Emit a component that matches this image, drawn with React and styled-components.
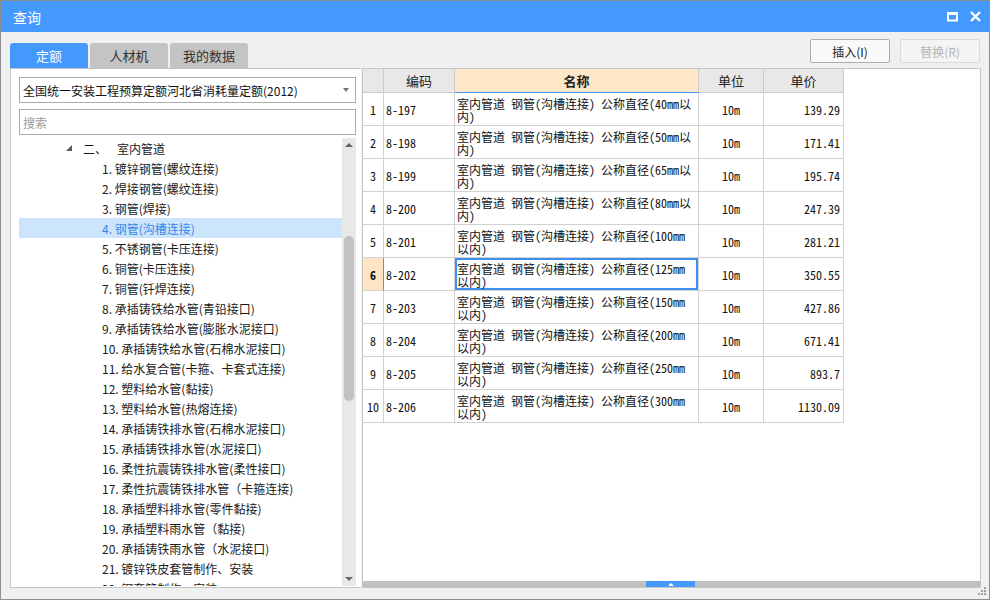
import React from 'react';
import styled, { createGlobalStyle } from 'styled-components';

const UI = '"Noto Sans CJK SC", "Microsoft YaHei", sans-serif';
const MONO = '"Noto Sans Mono CJK SC", "Liberation Mono", "Noto Sans CJK SC", monospace';

const GlobalStyle = createGlobalStyle`
  html, body { margin: 0; padding: 0; }
  body { font-family: ${UI}; font-size: 12px; color: #1a1a1a; background: #fff; }
  * { box-sizing: border-box; }
`;

const Window = styled.div`
  width: 990px;
  height: 600px;
  border: 1px solid #8f8f8f;
  background: #f0f0f0;
  display: flex;
  flex-direction: column;
  position: relative;
  overflow: hidden;
`;

const TitleBar = styled.div`
  height: 31px;
  flex: none;
  background: #4499ff;
  display: flex;
  align-items: center;
  justify-content: space-between;
  padding: 0 8px 0 12px;
  color: #fff;
`;

const Title = styled.span`
  font-size: 14px;
  line-height: 1;
`;

const WinControls = styled.div`
  display: flex;
  align-items: center;
  gap: 12px;
`;

const Body = styled.div`
  flex: 1;
  min-height: 0;
  display: grid;
  grid-template-columns: 351px 619px;
  grid-template-rows: 36px 1fr;
  column-gap: 1px;
  padding: 0 8px 11px 9px;
`;

const Tabs = styled.div`
  align-self: end;
  display: flex;
  gap: 2px;
`;

const Tab = styled.div`
  width: ${p => p.$w}px;
  height: 25px;
  border-radius: 3px 3px 0 0;
  background: ${p => (p.$active ? '#4499ff' : '#c4c4c4')};
  color: ${p => (p.$active ? '#fff' : '#333')};
  font-size: 13px;
  display: flex;
  align-items: center;
  justify-content: center;
`;

const Toolbar = styled.div`
  display: flex;
  justify-content: flex-end;
  align-items: flex-start;
  gap: 10px;
  padding: 7px 1px 0 0;
`;

const Button = styled.button`
  width: 80px;
  height: 24px;
  border: 1px solid ${p => (p.disabled ? '#d9d9d9' : '#adadad')};
  border-radius: 2px;
  background: ${p => (p.disabled ? '#f4f4f4' : '#f9f9f9')};
  color: ${p => (p.disabled ? '#b4b4b4' : '#222')};
  font-family: ${UI};
  font-size: 12px;
  padding: 0;
  cursor: default;
`;

const LeftPanel = styled.div`
  background: #fff;
  border: 1px solid #c6c6c6;
  border-right: none;
  padding: 8px 5px 0 8px;
  display: flex;
  flex-direction: column;
  min-height: 0;
`;

const Combo = styled.div`
  height: 26px;
  flex: none;
  border: 1px solid #ababab;
  background: #fff;
  display: flex;
  align-items: center;
  justify-content: space-between;
  padding: 0 6px 0 3px;
  font-size: 12px;
  color: #111;
`;

const ComboArrow = styled.span`
  width: 0;
  height: 0;
  border-left: 3.5px solid transparent;
  border-right: 3.5px solid transparent;
  border-top: 4px solid #777;
`;

const Search = styled.input`
  height: 26px;
  flex: none;
  margin-top: 6px;
  border: 1px solid #ababab;
  padding: 0 3px;
  font-family: ${UI};
  font-size: 12px;
  outline: none;
  &::placeholder { color: #9a9a9a; }
`;

const Tree = styled.div`
  flex: 1;
  min-height: 0;
  margin-top: 3px;
  margin-bottom: 1px;
  display: flex;
`;

const TreeList = styled.div`
  flex: 1;
  overflow: hidden;
`;

const TreeRow = styled.div`
  height: 20px;
  display: flex;
  align-items: center;
  white-space: nowrap;
  padding-left: ${p => p.$indent}px;
  background: ${p => (p.$selected ? '#cce5fc' : 'transparent')};
  color: ${p => (p.$selected ? '#3b86e6' : '#1a1a1a')};
  font-size: 12px;
`;

const Expander = styled.span`
  width: 0;
  height: 0;
  border-left: 6px solid transparent;
  border-bottom: 6px solid #595959;
  margin-right: 11px;
`;

const GroupNo = styled.span`
  margin-right: 10px;
`;

const VScroll = styled.div`
  width: 14px;
  flex: none;
  background: #e8e8e8;
  display: flex;
  flex-direction: column;
`;

const ScrollArrow = styled.div`
  height: 14px;
  flex: none;
  display: flex;
  align-items: center;
  justify-content: center;
  &::after {
    content: '';
    width: 0;
    height: 0;
    border-left: 4px solid transparent;
    border-right: 4px solid transparent;
    ${p => (p.$down ? 'border-top: 4px solid #666;' : 'border-bottom: 4px solid #666;')}
  }
`;

const VTrack = styled.div`
  flex: 1;
  padding: 84px 2px 0 2px;
`;

const VThumb = styled.div`
  height: 165px;
  border-radius: 5px;
  background: #c2c2c2;
`;

const RightPanel = styled.div`
  background: #fff;
  border: 1px solid #c6c6c6;
  display: flex;
  flex-direction: column;
  min-height: 0;
`;

const TableWrap = styled.div`
  flex: 1;
  min-height: 0;
  overflow: hidden;
`;

const COLS = '21px 71px 244px 65px 80px';

const HeadRow = styled.div`
  display: grid;
  grid-template-columns: ${COLS};
  height: 24px;
`;

const HeadCell = styled.div`
  border-right: 1px solid #cbcbcb;
  border-bottom: 1px solid ${p => (p.$hl ? '#4499ff' : '#cbcbcb')};
  background: ${p => (p.$hl ? '#fee6c9' : '#e8e8e8')};
  font-weight: ${p => (p.$hl ? 700 : 400)};
  font-size: 13px;
  color: #222;
  display: flex;
  align-items: center;
  justify-content: center;
`;

const DataRow = styled.div`
  display: grid;
  grid-template-columns: ${COLS};
  height: 33px;
  font-family: ${MONO};
  font-size: 12px;
  color: #111;
`;

const Cell = styled.div`
  border-right: 1px solid #d2d2d2;
  border-bottom: 1px solid #d2d2d2;
  display: flex;
  align-items: center;
  justify-content: ${p => p.$align || 'flex-start'};
  padding: 0 ${p => (p.$align === 'flex-end' ? '3px' : '2px')};
  white-space: nowrap;
`;

const NumCell = styled(Cell)`
  justify-content: center;
  padding: 0;
  background: ${p => (p.$sel ? '#fde4c3' : '#fff')};
  font-weight: ${p => (p.$sel ? 700 : 400)};
  border-right-color: ${p => (p.$sel ? '#4499ff' : '#d2d2d2')};
`;

const NameCell = styled.div`
  border-right: 1px solid #d2d2d2;
  border-bottom: 1px solid #d2d2d2;
  padding: 4px 2px 0 2px;
  line-height: 13px;
  white-space: pre;
  overflow: hidden;
  box-shadow: ${p => (p.$sel ? 'inset 0 0 0 2px #3f8ff0' : 'none')};
`;

const HScroll = styled.div`
  height: 6px;
  flex: none;
  background: #c0c0c0;
  padding-left: 283px;
  display: flex;
`;

const HThumb = styled.div`
  width: 49px;
  background: #4499ff;
  display: flex;
  align-items: center;
  justify-content: center;
  &::after {
    content: '';
    width: 0;
    height: 0;
    border-left: 3px solid transparent;
    border-right: 3px solid transparent;
    border-bottom: 3px solid #fff;
  }
`;

const Grip = styled.svg`
  position: absolute;
  right: 2px;
  bottom: 3px;
`;

const treeItems = [
  '1. 镀锌钢管(螺纹连接)',
  '2. 焊接钢管(螺纹连接)',
  '3. 钢管(焊接)',
  '4. 钢管(沟槽连接)',
  '5. 不锈钢管(卡压连接)',
  '6. 铜管(卡压连接)',
  '7. 铜管(钎焊连接)',
  '8. 承插铸铁给水管(青铅接口)',
  '9. 承插铸铁给水管(膨胀水泥接口)',
  '10. 承插铸铁给水管(石棉水泥接口)',
  '11. 给水复合管(卡箍、卡套式连接)',
  '12. 塑料给水管(黏接)',
  '13. 塑料给水管(热熔连接)',
  '14. 承插铸铁排水管(石棉水泥接口)',
  '15. 承插铸铁排水管(水泥接口)',
  '16. 柔性抗震铸铁排水管(柔性接口)',
  '17. 柔性抗震铸铁排水管（卡箍连接)',
  '18. 承插塑料排水管(零件黏接)',
  '19. 承插塑料雨水管（黏接)',
  '20. 承插铸铁雨水管（水泥接口)',
  '21. 镀锌铁皮套管制作、安装',
  '22. 钢套管制作、安装',
];

const rows = [
  ['8-197', '40mm', '139.29'],
  ['8-198', '50mm', '171.41'],
  ['8-199', '65mm', '195.74'],
  ['8-200', '80mm', '247.39'],
  ['8-201', '100mm', '281.21'],
  ['8-202', '125mm', '350.55'],
  ['8-203', '150mm', '427.86'],
  ['8-204', '200mm', '671.41'],
  ['8-205', '250mm', '893.7'],
  ['8-206', '300mm', '1130.09'],
];

function nameLines(size) {
  const base = '室内管道 钢管(沟槽连接) 公称直径(' + size;
  if (size.length <= 4) return base + '以\n内)';
  return base + '\n以内)';
}

export default function App() {
  return (
    <>
      <GlobalStyle />
      <Window>
        <TitleBar>
          <Title>查询</Title>
          <WinControls>
            <svg width="11" height="10" viewBox="0 0 11 10">
              <rect x="1" y="1.5" width="9" height="7" fill="none" stroke="#fff" strokeWidth="2" />
              <rect x="0" y="0" width="11" height="3" fill="#fff" />
            </svg>
            <svg width="11" height="11" viewBox="0 0 11 11">
              <path d="M1 1 L10 10 M10 1 L1 10" stroke="#fff" strokeWidth="2.4" />
            </svg>
          </WinControls>
        </TitleBar>
        <Body>
          <Tabs>
            <Tab $w={78} $active>定额</Tab>
            <Tab $w={78}>人材机</Tab>
            <Tab $w={78}>我的数据</Tab>
          </Tabs>
          <Toolbar>
            <Button>插入(I)</Button>
            <Button disabled>替换(R)</Button>
          </Toolbar>
          <LeftPanel>
            <Combo>
              <span>全国统一安装工程预算定额河北省消耗量定额(2012)</span>
              <ComboArrow />
            </Combo>
            <Search placeholder="搜索" />
            <Tree>
              <TreeList>
                <TreeRow $indent={47}>
                  <Expander />
                  <GroupNo>二、</GroupNo>
                  <span>室内管道</span>
                </TreeRow>
                {treeItems.map((t, i) => (
                  <TreeRow key={t} $indent={83} $selected={i === 3}>
                    {t}
                  </TreeRow>
                ))}
              </TreeList>
              <VScroll>
                <ScrollArrow />
                <VTrack>
                  <VThumb />
                </VTrack>
                <ScrollArrow $down />
              </VScroll>
            </Tree>
          </LeftPanel>
          <RightPanel>
            <TableWrap>
              <HeadRow>
                <HeadCell />
                <HeadCell>编码</HeadCell>
                <HeadCell $hl>名称</HeadCell>
                <HeadCell>单位</HeadCell>
                <HeadCell>单价</HeadCell>
              </HeadRow>
              {rows.map(([code, size, price], i) => (
                <DataRow key={code}>
                  <NumCell $sel={i === 5}>{i + 1}</NumCell>
                  <Cell>{code}</Cell>
                  <NameCell $sel={i === 5}>{nameLines(size)}</NameCell>
                  <Cell $align="center">10m</Cell>
                  <Cell $align="flex-end">{price}</Cell>
                </DataRow>
              ))}
            </TableWrap>
            <HScroll>
              <HThumb />
            </HScroll>
          </RightPanel>
        </Body>
        <Grip width="9" height="9" viewBox="0 0 9 9">
          <rect x="6" y="0" width="2" height="2" fill="#a0a0a0" />
          <rect x="3" y="3" width="2" height="2" fill="#a0a0a0" />
          <rect x="6" y="3" width="2" height="2" fill="#a0a0a0" />
          <rect x="0" y="6" width="2" height="2" fill="#a0a0a0" />
          <rect x="3" y="6" width="2" height="2" fill="#a0a0a0" />
          <rect x="6" y="6" width="2" height="2" fill="#a0a0a0" />
        </Grip>
      </Window>
    </>
  );
}
